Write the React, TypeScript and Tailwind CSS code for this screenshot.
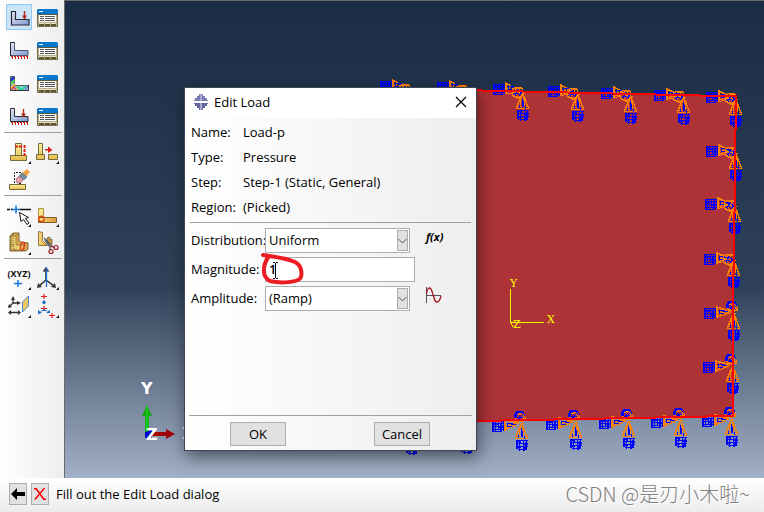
import React from "react";

type P = { children?: React.ReactNode };

function Ico({ children }: P) {
  return (
    <svg width="28" height="28" viewBox="0 0 28 28" className="block shrink-0" fill="none" aria-hidden="true">
      {children}
    </svg>
  );
}

const Corner = () => <path d="M26 23v3h-3z" fill="#111" />;

const Defs = () => (
  <svg width="0" height="0" className="absolute" aria-hidden="true">
    <defs>
      <linearGradient id="steel" x1="0" y1="0" x2="1" y2="1">
        <stop offset="0" stopColor="#e4e6f4" />
        <stop offset="1" stopColor="#7f9ad0" />
      </linearGradient>
      <linearGradient id="gold" x1="0" y1="0" x2="0" y2="1">
        <stop offset="0" stopColor="#fbf3a0" />
        <stop offset="1" stopColor="#e5bd4e" />
      </linearGradient>
      <linearGradient id="amber" x1="0" y1="0" x2="1" y2="0">
        <stop offset="0" stopColor="#f9dc83" />
        <stop offset="1" stopColor="#e09a3a" />
      </linearGradient>
    </defs>
  </svg>
);

const Feet = ({ y }: { y: number }) => (
  <g stroke="#d01c10">
    <path d={`M6 ${y + 0.5}H24`} strokeDasharray="2 1" />
    <path d={`M7 ${y + 2}H24`} strokeWidth="2" strokeDasharray="1 2" />
  </g>
);

const Arrow = ({ x, y }: { x: number; y: number }) => (
  <g>
    <path d={`M${x} ${y}v8`} stroke="#b52a1c" strokeWidth="1.4" />
    <path d={`M${x - 2.5} ${y + 4.5}h5l-2.5 4z`} fill="#b52a1c" />
  </g>
);

const LoadIcon = () => (
  <Ico>
    <path d="M6.5 8.500h4v8h13.500v5.500H6.500z" fill="url(#steel)" stroke="#2b2b38" strokeWidth="1.2" />
    <Arrow x={19.5} y={8} />
  </Ico>
);
const BcIcon = () => (
  <Ico>
    <path d="M5.500 6.500h4v8h13.500v5H5.500z" fill="url(#steel)" stroke="#55586c" />
    <path d="M5.500 20V6.500h4" stroke="#22222c" />
    <Feet y={20} />
  </Ico>
);
const FieldIcon = () => (
  <Ico>
    <path d="M5.500 7.500h4v9h14v5h-18z" fill="#8ed1e6" stroke="#555" />
    <path d="M6 10l3-2M6 12l3-3" stroke="#1722e0" strokeWidth="1.500" />
    <path d="M6 15l3.500-4" stroke="#35dc2c" strokeWidth="1.800" />
    <path d="M6 19l4-4M11 20l3-3" stroke="#eeb040" strokeWidth="1.800" />
    <path d="M6 21l3-3 2 3" stroke="#e74646" strokeWidth="1.500" />
    <path d="M12 17l4 4 5-4" stroke="#27d693" strokeWidth="1.800" />
    <path d="M20 21l3-4" stroke="#8b77e5" strokeWidth="1.500" />
    <path d="M23.500 16v6M5 21.500h19" stroke="#333" />
  </Ico>
);
const LoadCaseIcon = () => (
  <Ico>
    <path d="M5.500 6.500h4v8h13.500v5H5.500z" fill="url(#steel)" stroke="#2b2b38" />
    <Arrow x={18.5} y={7} />
    <Feet y={20} />
  </Ico>
);
const ManagerIcon = () => (
  <Ico>
    <path d="M4 7h21v17H4z" fill="#b7b08c" />
    <path d="M4.500 11v12.500h20V11" stroke="#746c49" />
    <path d="M5 6h19l1 1v4H4V7z" fill="#0877cb" />
    <path d="M6 8.500h4" stroke="#fff" />
    <path d="M4 11.500h21" stroke="#5b593f" />
    <path d="M6 12h17v7H6z" fill="#fdfdfd" />
    <path d="M7 13.500h4M12 13.500h10M7 15.500h4M12 15.500h10M7 17.500h4M12 17.500h10" stroke="#555" />
    <path d="M6 20h5v3H6zM12 20h5v3h-5zM18 20h5v3h-5z" fill="#e9e4c8" />
    <path d="M6 21h5v2H6zM12 21h5v2h-5zM18 21h5v2h-5z" fill="#5c5530" />
  </Ico>
);
const ColumnIcon = () => (
  <Ico>
    <path d="M10.500 5.500h6v12h-6zM5.500 17.500h16v5h-16z" fill="url(#gold)" stroke="#756b38" />
    <path d="M10 8.500h7M19.500 7v12" stroke="#d6200e" strokeWidth="2" strokeDasharray="3 1" />
    <Corner />
  </Ico>
);
const MoveIcon = () => (
  <Ico>
    <path d="M5.500 5.500h4v11h-4zM3.500 16.500h8v5h-8zM15.500 16.500h9v5h-9z" fill="url(#gold)" stroke="#756b38" />
    <path d="M12 11h3V8.500l4.500 3.500-4.500 3v-2.500h-3z" fill="#d6200e" />
    <Corner />
  </Ico>
);
const EraserIcon = () => (
  <Ico>
    <path d="M9.500 17V6.500h7" stroke="#222" strokeDasharray="2 1" />
    <path d="M4.500 18.500h16v5h-16z" fill="url(#gold)" stroke="#756b38" />
    <path d="M14 15l2-1v4h-2z" fill="#222" />
    <path d="M15 9l7-6 3 3-6 7z" fill="#eea143" stroke="#f9cd7a" strokeWidth=".6" />
    <path d="M14 10l3-3 5 4-3 3z" fill="#7792a4" stroke="#435765" strokeWidth=".6" />
    <path d="M11 13l3-3 4 4-3 3h-3z" fill="#e7a2ad" stroke="#9a5968" strokeWidth=".7" />
  </Ico>
);
const PointIcon = () => (
  <Ico>
    <path d="M2 8.500h3M6 8.500h2M15 8.500h11" stroke="#111" strokeWidth="1.300" />
    <path d="M7 8.500h8M11 4.500v8" stroke="#1677d8" strokeWidth="1.600" />
    <path d="M14.500 11.500l1.500 9 2.500-2 3.500 5 2-1.500-3.500-4.500 3-1z" fill="#fff" stroke="#111" />
    <Corner />
  </Ico>
);
const EdgeIcon = () => (
  <Ico>
    <path d="M5.500 7.500h5v9h-5z" fill="#f9e787" stroke="#a99542" />
    <path d="M5.500 16.500h18v5h-18z" fill="url(#amber)" stroke="#805a26" />
    <circle cx="8.500" cy="18" r="2.700" stroke="#dc4812" strokeWidth="1.400" />
    <Corner />
  </Ico>
);
const SolidIcon = () => (
  <Ico>
    <path d="M5 7l3-3h6v8l2 1 7 1v6l-2 2H5z" fill="#d7a951" stroke="#6c5423" strokeWidth=".9" />
    <path d="M6 7h5v9h8v5H6zM11 7l3-3" fill="#ecce72" stroke="#89702f" strokeWidth=".7" />
    <path d="M8 5v14l3 2M6 16h4" stroke="#6c5423" strokeDasharray="1 1" />
    <ellipse cx="17.500" cy="17" rx="1.700" ry="4" transform="rotate(15 17 17)" stroke="#df3516" strokeWidth="1.300" />
    <Corner />
  </Ico>
);
const CutIcon = () => (
  <Ico>
    <path d="M5.500 2.500l4 1v8l5 5H5.500z" fill="url(#amber)" stroke="#937544" />
    <path d="M14 9l3-1v3l2-1v5h-4z" fill="#cf962f" stroke="#615946" strokeWidth=".7" />
    <path d="M11 9l9 9M12 11l5 7v4" stroke="#555c60" strokeWidth="1.300" />
    <path d="M17 17l5 2" stroke="#9c1c20" />
    <circle cx="23" cy="18.500" r="2" stroke="#9c1c20" strokeWidth="1.200" />
    <circle cx="18" cy="22.500" r="2" stroke="#9c1c20" strokeWidth="1.200" />
  </Ico>
);
const XyzIcon = () => (
  <Ico>
    <text x="14" y="13" textAnchor="middle" fill="#111" className="font-['Noto_Sans'] text-[9px] font-bold">(XYZ)</text>
    <path d="M9 19.500h8M13 16v7" stroke="#1677d8" strokeWidth="1.500" />
    <Corner />
  </Ico>
);
const AxesIcon = () => (
  <Ico>
    <path d="M13 16V4M13 16l-7 6M13 16l8 6" stroke="#222" strokeWidth="1.500" />
    <path d="M9.500 7.500L13 3l3.500 4.500zM4 24l1-5 4 4zM23 24l-1-5-4 4z" fill="#333" />
    <path d="M13.500 3v20" stroke="#1677d8" strokeWidth="1.300" />
    <Corner />
  </Ico>
);
const PlaneIcon = () => (
  <Ico>
    <path d="M17.500 10l6-6v10l-6 6z" fill="#f0c75f" stroke="#4b86c7" />
    <path d="M8 11V6M8 11h6M8 11l-4 4M5 20.500h9" stroke="#333" strokeWidth="1.300" />
    <path d="M6 8l2-4 2 4zM12 9l4 2-4 2zM3 16l1-4 3 3zM6 18l-3 2.500L6 23zM13 18l3 2.500-3 2.500z" fill="#333" />
    <Corner />
  </Ico>
);
const CsysIcon = () => (
  <Ico>
    <path d="M8 4.500h6M11 2v5M8 16.500h6M11 14v5M16 23.500h6M19 21v5" stroke="#e02020" strokeWidth="1.200" />
    <path d="M9 10.500l2-2.500 2 2.500-2 2zM5 22v-4l4 3zM17 21v-3l-4 3zM9 19l2-2 2 2" fill="#1668c8" />
    <path d="M10 18l-4 3M12 18l4 2" stroke="#1668c8" strokeDasharray="2 1" />
    <Corner />
  </Ico>
);

function Tool({ label, active, children }: P & { label: string; active?: boolean }) {
  return (
    <button
      type="button"
      aria-label={label}
      className={
        active
          ? "flex h-full w-full items-center justify-center bg-[#cbe4f8] outline outline-1 -outline-offset-1 outline-[#90c8f6]"
          : "flex h-full w-full items-center justify-center"
      }
    >
      {children}
    </button>
  );
}

function Toolbox() {
  const group = "grid auto-rows-[28px] grid-cols-[28px_28px] border-t border-[#a0a0a0] pt-[5px] pb-px pl-px";
  return (
    <nav
      aria-label="Toolbox"
      className="flex w-[65px] shrink-0 flex-col border-r border-[#6b6b6b] bg-linear-to-r from-white to-[#eeeeee] pr-0.5 pl-1"
    >
      <div className="grid auto-rows-[32px] grid-cols-[28px_28px] gap-y-px pt-px pl-px">
        <div className="flex px-px py-[3px]"><Tool label="Create load" active><LoadIcon /></Tool></div>
        <Tool label="Load manager"><ManagerIcon /></Tool>
        <Tool label="Create boundary condition"><BcIcon /></Tool>
        <Tool label="Boundary condition manager"><ManagerIcon /></Tool>
        <Tool label="Create predefined field"><FieldIcon /></Tool>
        <Tool label="Predefined field manager"><ManagerIcon /></Tool>
        <Tool label="Create load case"><LoadCaseIcon /></Tool>
        <Tool label="Load case manager"><ManagerIcon /></Tool>
      </div>
      <div className={group}>
        <Tool label="Virtual topology"><ColumnIcon /></Tool>
        <Tool label="Translate"><MoveIcon /></Tool>
        <Tool label="Remove"><EraserIcon /></Tool>
      </div>
      <div className={group}>
        <Tool label="Pick point"><PointIcon /></Tool>
        <Tool label="Partition edge"><EdgeIcon /></Tool>
        <Tool label="Partition cell"><SolidIcon /></Tool>
        <Tool label="Cut"><CutIcon /></Tool>
      </div>
      <div className={group}>
        <Tool label="Create datum point"><XyzIcon /></Tool>
        <Tool label="Create datum axis"><AxesIcon /></Tool>
        <Tool label="Create datum plane"><PlaneIcon /></Tool>
        <Tool label="Create datum coordinate system"><CsysIcon /></Tool>
      </div>
    </nav>
  );
}

/* Anchor nodes carrying a boundary-condition glyph: x, y, tilt of the horizontal arm */
const nodes: [number, number, number][] = [
  [409, 88, -3], [466, 89, -3], [522, 91, -3], [577, 92, -2], [630, 94, -2], [683, 95, -1], [735, 97, -1],
  [735, 151, -1], [734, 204, -1], [733, 258, 0], [733, 311, 1], [732, 364, 2],
  [731, 417, 3], [680, 418, 3], [628, 419, 3], [575, 420, 3], [521, 421, 4], [466, 424, 4], [411, 425, 4],
];

function Glyph({ x, y, t }: { x: number; y: number; t: number }) {
  return (
    <g transform={`translate(${x + 0.5} ${y + 0.5})`} fill="none" strokeWidth="1">
      <path d="M-5 18v9M-4 19v8M-2 18v11M2 18v11M4 20v7M5 18v9M-6 19h12M-5 20h4M-5 22h11M1 23h5M-6 25h12M-5 26h4M-4 28h9M-1 18v4M3 24v5" stroke="#0000ff" />
      <path d="M0 2l-6 15h12L0 2M-1 3l-5 13M1 3l5 13M-1 5l-2 12M1 5l2 12M-5 15h4M2 15h4M-1 2h3" stroke="#ff8000" />
      <path d="M0 6v9M1 9v6M-3 13v3M3 14v3" stroke="#0000ff" />
      <g transform={`translate(0 ${t})`}>
        <path d="M-29-4h11M-30-2h12M-29-1h5M-29 1h11M-23 2h5M-28 4h11M-29 6h8M-29-5V6M-28-4V5M-26-4V6M-23-5V4M-21-3V5M-20-4V6M-18-5V5" stroke="#0000ff" />
        <path d={`M-17-6L-2 ${-t}M-16-5L-2 ${1 - t}M-17-6V5L-2 ${1 - t}M-16 3L-3 ${-t}M-16-6V5M-15 0L-3 ${-t}M-13-4v7M-9-3v5M-6-2v3`} stroke="#ff8000" />
        <path d="M-15-2h6M-15 1h5M-11-1h5M-14-3v4" stroke="#0000ff" />
      </g>
      {t < 1 ? (
        <g>
          <path d="M-10-3l4-1h5l1 2v6l-4 3-6-3zM-9 3l5 3 4-2M-7-1l5 5M-3-2l-4 6M-8 2h6M-7-3h5" stroke="#ff8000" />
          <path d="M-8-1h3l-2 4M-4 5l4-5M-9 3l3-2 3 2M-2-1v3M-5-2l3 3M-7 1v3" stroke="#0000ff" />
        </g>
      ) : (
        <g>
          <path d="M-7-4v-2l2-4h6l2 3v2M-6-4v-2l2-3h4l2 3M-5-3v-3l2-3h4l2 2M-6-3h3" stroke="#0000ff" />
          <path d="M-4-7l4-1 4 4v3h-6l-4-2M-3-4l5 2M1-5l3 4M-6-1l8 1" stroke="#ff8000" />
          <path d="M-3-6l3 4M1-6l-4 4M-4-4h5" stroke="#0000ff" />
        </g>
      )}
    </g>
  );
}

function Scene() {
  return (
    <svg
      className="block h-full w-full"
      viewBox="65 0 699 478"
      preserveAspectRatio="xMinYMin slice"
      role="img"
      aria-label="Model viewport"
    >
      <path d="M440 90L477 90 735 96 734 220 732 416 477 421 440 422z" fill="#ad3337" />
      <g shapeRendering="crispEdges">
        {nodes.map(([x, y, t]) => (
          <Glyph key={`${x}-${y}`} x={x} y={y} t={t} />
        ))}
      </g>
      <path d="M440 89.500L523 91.500 700 95.500 736 96V129L735 130V185L734 240 733 310V416L477 421" fill="none" stroke="#ff0000" strokeWidth="2" shapeRendering="crispEdges" />
      <path d="M510.500 289v33.500h33M511 323l2 4" fill="none" stroke="#ffff00" shapeRendering="crispEdges" />
      <g fill="#ffff00" className="font-['DejaVu_Serif'] text-[11px]">
        <text x="510" y="287">Y</text>
        <text x="547" y="323">X</text>
        <text x="513" y="328">Z</text>
      </g>
      <path d="M145 434v-19h4v19z" fill="#12b312" />
      <path d="M142 416l5-11 5 11z" fill="#0fa60f" />
      <path d="M147 406v29" stroke="#22e022" />
      <path d="M150 432h16v-3l9 5-9 5v-3h-16z" fill="#a00606" />
      <path d="M145 432l7-2v9h-5l-2-2z" fill="#0000c8" />
      <g fill="#ffffff" className="font-['DejaVu_Sans'] text-[16px] font-bold">
        <text x="141" y="394">Y</text>
        <text x="146" y="440">Z</text>
        <text x="182" y="439">X</text>
      </g>
    </svg>
  );
}

const box = "h-[25px] border border-[#abadb3] bg-white pb-px pl-[3px] text-[13px] leading-[18px] outline-none";

function Combo({ id, value }: { id: string; value: string }) {
  return (
    <div className="relative w-[145px]">
      <select id={id} defaultValue={value} className={`${box} block w-full appearance-none`}>
        <option>{value}</option>
      </select>
      <span className="pointer-events-none absolute top-0.5 right-0.5 flex h-[21px] w-[11px] items-center justify-center border border-[#adadad] bg-[#e1e1e1]">
        <svg width="9" height="6" viewBox="0 0 9 6" className="shrink-0" fill="none" stroke="#555">
          <path d="M.5 1l4 4 4-4" />
        </svg>
      </span>
    </div>
  );
}

function EditLoadDialog() {
  const info = [
    ["Name:", "Load-p"],
    ["Type:", "Pressure"],
    ["Step:", "Step-1 (Static, General)"],
    ["Region:", "(Picked)"],
  ];
  const action = "h-6 w-14 border border-[#adadad] bg-[#e1e1e1] leading-5";
  return (
    <section
      role="dialog"
      aria-labelledby="dlg-title"
      className="absolute top-[87px] left-[119px] flex h-[364px] w-[293px] flex-col border border-[#3e4654] bg-linear-to-r from-white to-[#eeeeee] shadow-[2px_6px_16px_rgba(0,0,0,0.5)]"
    >
      <header className="flex h-[30px] items-center bg-white pr-[9px] pb-0.5 pl-2">
        <svg width="16" height="16" viewBox="0 0 16 16" aria-hidden="true">
          <path d="M6 0h4v2h2v2h2v2h1v1H1V6h1V4h2V2h2z" fill="#7b7bb4" />
          <path d="M1 9h14v1h-1v2h-2v2h-2v2H6v-2H4v-2H2v-2H1z" fill="#66669f" />
          <path d="M7 0h2v7H7zM7 9h2v7H7z" fill="#a7a7cf" />
        </svg>
        <h1 id="dlg-title" className="ml-[5px] flex-1 text-[13px] leading-5">Edit Load</h1>
        <button type="button" aria-label="Close">
          <svg width="12" height="12" viewBox="0 0 12 12" stroke="#000" strokeWidth="1.200">
            <path d="M1 1l10 10M11 1L1 11" />
          </svg>
        </button>
      </header>
      <dl className="mx-[5px] grid auto-rows-[25px] grid-cols-[52px_1fr] items-center border-b border-[#a0a0a0] pt-px pb-[3px] pl-px">
        {info.map(([k, v]) => (
          <React.Fragment key={k}>
            <dt>{k}</dt>
            <dd>{v}</dd>
          </React.Fragment>
        ))}
      </dl>
      <form className="flex flex-1 flex-col" onSubmit={(e) => e.preventDefault()}>
        <div className="grid grid-cols-[74px_150px_1fr] items-center gap-y-1 pt-[5px] pl-1.5">
          <label htmlFor="dist" className="pb-px">Distribution:</label>
          <Combo id="dist" value="Uniform" />
          <button type="button" className="ml-[11px] self-start justify-self-start font-['Open_Sans'] text-[11px] leading-[18px] font-bold italic">
            f(x)
          </button>
          <label htmlFor="mag" className="pb-px">Magnitude:</label>
          <div className="relative">
            <input id="mag" type="text" defaultValue="1" className={`${box} block w-full font-semibold`} />
            <svg className="pointer-events-none absolute -top-1.5 -left-1" width="46" height="36" viewBox="0 0 46 36" fill="none">
              <path d="M2 4C14 6 26 7 34 11 42 15 42 27 37 29 30 32 17 32 9 30 1 26 1 15 8 5" stroke="#ed1c24" strokeWidth="4" strokeLinecap="round" strokeLinejoin="round" />
              <path d="M12 11.500h2M15 11.500h2M12 27.500h2M15 27.500h2M14.500 12v15" stroke="#000" />
            </svg>
          </div>
          <span />
          <label htmlFor="amp" className="pb-px">Amplitude:</label>
          <Combo id="amp" value="(Ramp)" />
          <button type="button" aria-label="Create amplitude" className="ml-2.5 self-start justify-self-start">
            <svg width="17" height="18" viewBox="0 0 17 18" fill="none">
              <path d="M1.500 1v16M1 9.500h15" stroke="#555" />
              <path d="M1.500 8C2 4 3 2 4.500 2 7 2 7 7 8.500 10 9.500 14 10 16 12 16 14 16 15 14 16 10" stroke="#a01822" strokeWidth="1.300" />
            </svg>
          </button>
        </div>
        <footer className="mx-1 mt-auto flex justify-between border-t border-[#a0a0a0] pt-1.5 pr-[42px] pb-1 pl-[41px]">
          <button type="submit" className={action}>OK</button>
          <button type="button" className={action}>Cancel</button>
        </footer>
      </form>
    </section>
  );
}

function PromptBar() {
  const btn = "flex h-[22px] w-[18px] items-center justify-center border border-[#adadad] bg-[#e1e1e1]";
  return (
    <footer className="flex h-[34px] shrink-0 items-center bg-linear-to-b from-white to-[#ececec] pr-3.5 pb-0.5 pl-[9px]">
      <button type="button" aria-label="Previous" className={btn}>
        <svg width="14" height="12" viewBox="0 0 14 12" className="shrink-0">
          <path d="M0 6l6-6v4h8v4H6v4z" fill="#000" />
        </svg>
      </button>
      <button type="button" aria-label="Cancel procedure" className={`${btn} ml-1`}>
        <svg width="12" height="12" viewBox="0 0 12 12" fill="none" stroke="#ff0000" strokeWidth="1.500" className="shrink-0">
          <path d="M2 .5l8 11M10.500 0L1 11.500M0 .7h3M9 11.300h3" />
        </svg>
      </button>
      <p className="ml-[7px] flex-1">Fill out the Edit Load dialog</p>
      <p className="font-['Noto_Sans_CJK_SC',sans-serif] text-[20px] leading-7 font-light text-[#808080] [text-shadow:1px_1px_0_#ffffff]">CSDN @是刃小木啦~</p>
    </footer>
  );
}

export default function App() {
  return (
    <div className="flex h-screen flex-col overflow-hidden bg-white font-['Open_Sans','Noto_Sans_CJK_SC',sans-serif] text-[13px] leading-5 text-black">
      <Defs />
      <main className="flex min-h-0 flex-1">
        <Toolbox />
        <div className="relative min-w-0 flex-1 overflow-hidden bg-[linear-gradient(to_bottom,#1b2d46_0%,#2f4158_60%,#a3b1c8_100%)] shadow-[inset_0_1px_0_#6b6b6b]">
          <Scene />
          <EditLoadDialog />
        </div>
      </main>
      <PromptBar />
    </div>
  );
}
